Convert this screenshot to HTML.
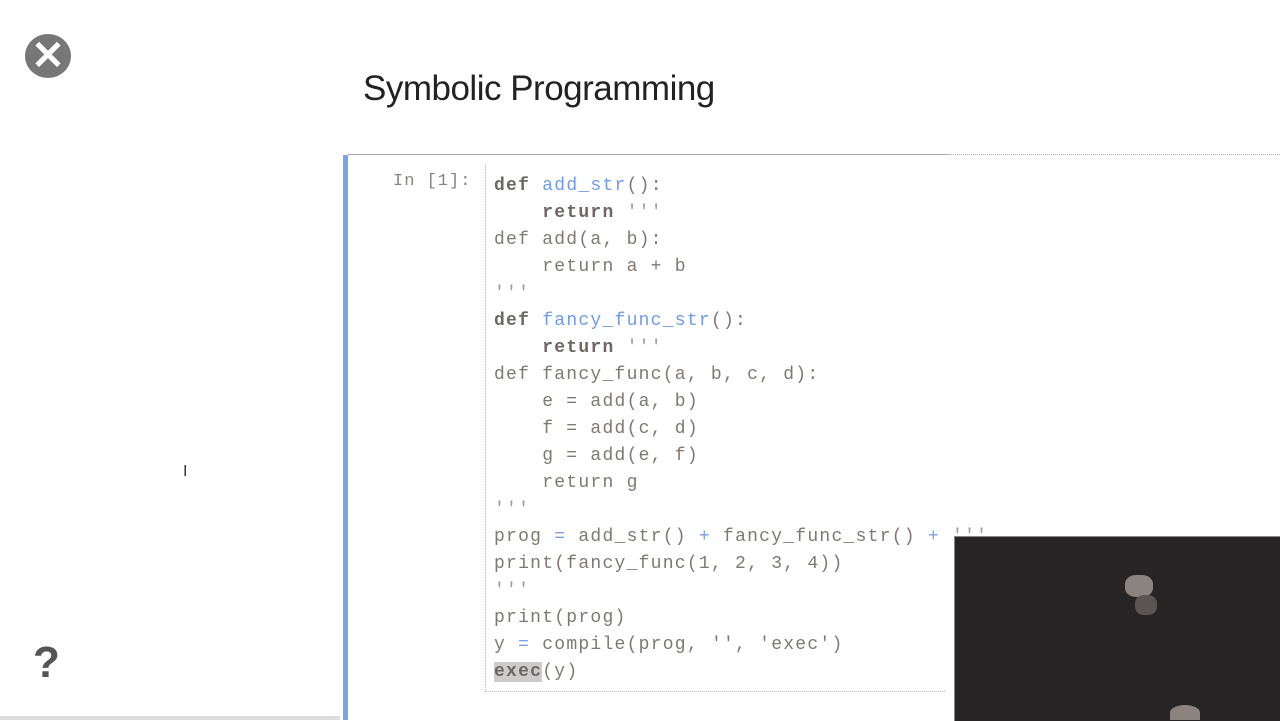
<!DOCTYPE html>
<html><head><style>
body{margin:0;width:1280px;height:720px;overflow:hidden;background:#fff;position:relative;font-family:"Liberation Sans",sans-serif}
.abs{position:absolute}
pre{margin:0;font-family:"Liberation Mono",monospace;font-size:18px;letter-spacing:1.25px;line-height:27px;color:#7f7873}
.b{color:#6e6662;font-weight:bold}
.f{color:#6f9be8}
.o{color:#7aa0e8}
.s{color:#a09a96}
</style></head><body>
<div class="abs" style="left:25px;top:34px;width:46px;height:44px;border-radius:50%;background:#777"></div>
<div class="abs" style="left:25px;top:32px;width:46px;text-align:center;color:#fff;font-size:40px;font-weight:bold;line-height:48px">✕</div>
<div class="abs" style="left:33px;top:638px;font-size:44px;font-weight:bold;color:#555">?</div>
<div class="abs" style="left:363px;top:69px;font-size:35px;color:#222;letter-spacing:-0.5px">Symbolic Programming</div>
<div class="abs" style="left:343px;top:155px;width:5px;height:565px;background:#7aa4ee"></div>
<div class="abs" style="left:348px;top:154px;width:600px;height:1px;background:#aaa"></div>
<div class="abs" style="left:948px;top:154px;width:332px;border-top:1px dotted #aaa"></div>
<div class="abs" style="left:393px;top:172px;font-family:'Liberation Mono',monospace;font-size:17px;color:#8a8480;letter-spacing:1px">In [1]:</div>
<div class="abs" style="left:485px;top:165px;height:525px;border-left:1px dotted #bbb"></div>
<div class="abs" style="left:485px;top:691px;width:460px;border-top:1px dotted #bbb"></div>
<pre class="abs" style="left:494px;top:173px"><span class="b">def</span> <span class="f">add_str</span>():
    <span class="b">return</span> <span class="s">'''</span>
def add(a, b):
    return a + b
<span class="s">'''</span>
<span class="b">def</span> <span class="f">fancy_func_str</span>():
    <span class="b">return</span> <span class="s">'''</span>
def fancy_func(a, b, c, d):
    e = add(a, b)
    f = add(c, d)
    g = add(e, f)
    return g
<span class="s">'''</span>
prog <span class="o">=</span> add_str() <span class="o">+</span> fancy_func_str() <span class="o">+</span> <span class="s">'''</span>
print(fancy_func(1, 2, 3, 4))
<span class="s">'''</span>
print(prog)
y <span class="o">=</span> compile(prog, '', 'exec')
<span class="b" style="background:#ccc">exec</span>(y)</pre>
<div class="abs" style="left:183px;top:463px;font-size:16px;color:#333">I</div>
<div class="abs" style="left:954px;top:536px;width:326px;height:184px;background:#262424;border-left:1px solid #888;border-top:1px solid #888"></div>
<div class="abs" style="left:1125px;top:575px;width:28px;height:22px;background:#8a8380;border-radius:40%"></div>
<div class="abs" style="left:1135px;top:595px;width:22px;height:20px;background:#5a5552;border-radius:40%"></div>
<div class="abs" style="left:1170px;top:705px;width:30px;height:15px;background:#8a8380;border-radius:50% 50% 0 0"></div>
<div class="abs" style="left:0;top:716px;width:340px;height:4px;background:#ddd"></div>
</body></html>
